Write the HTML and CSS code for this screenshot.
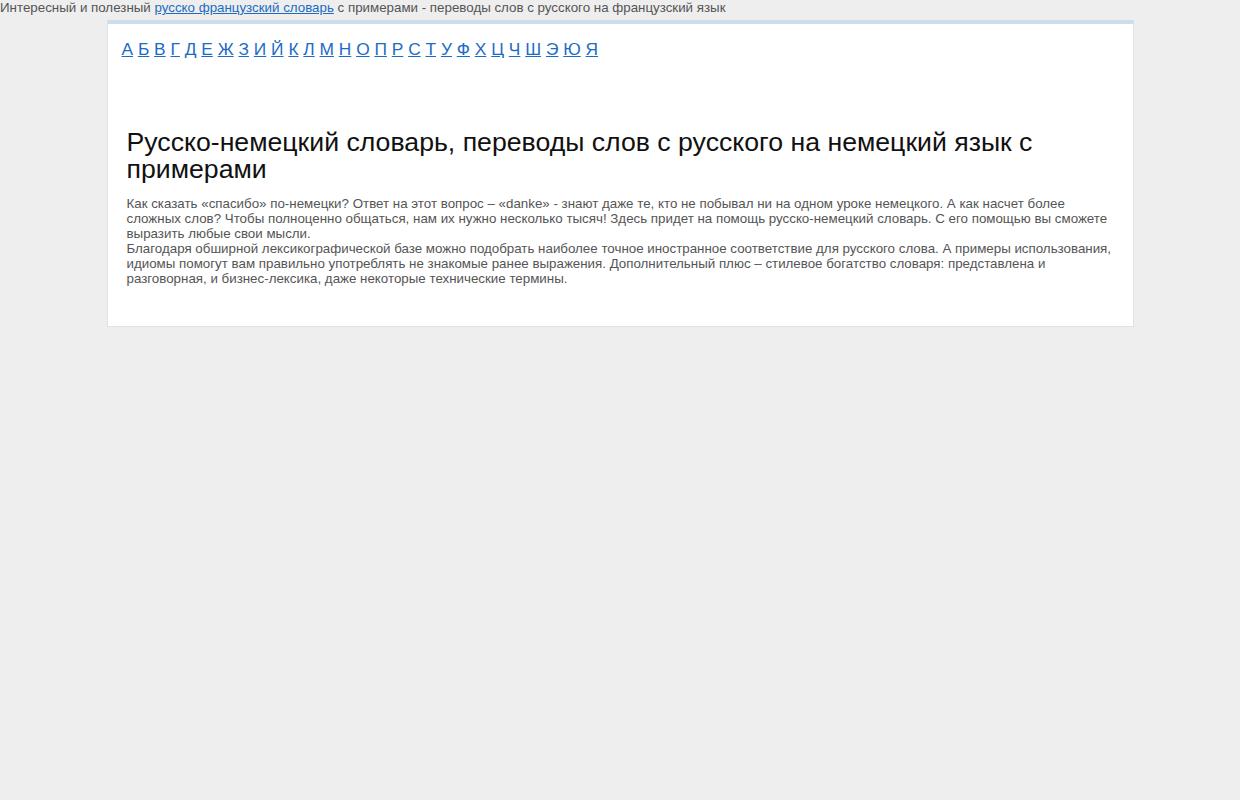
FILE: index.html
```html
<!DOCTYPE html>
<html lang="ru">
<head>
<meta charset="UTF-8" />
<meta name="viewport" content="width=device-width, initial-scale=1" />
<title>Русско-немецкий словарь</title>
<link rel="stylesheet" href="styles.css">
</head>
<body>

<div class="promo">
  Интересный и полезный <a href="#">русско французский словарь</a> с примерами - переводы слов с русского на французский язык
</div>

<div class="page">
  <!-- Alphabet -->
  <nav class="abc">
    <a href="#">А</a> <a href="#">Б</a> <a href="#">В</a> <a href="#">Г</a> <a href="#">Д</a> <a href="#">Е</a> <a href="#">Ж</a> <a href="#">З</a> <a href="#">И</a> <a href="#">Й</a> <a href="#">К</a> <a href="#">Л</a> <a href="#">М</a> <a href="#">Н</a> <a href="#">О</a> <a href="#">П</a> <a href="#">Р</a> <a href="#">С</a> <a href="#">Т</a> <a href="#">У</a> <a href="#">Ф</a> <a href="#">Х</a> <a href="#">Ц</a> <a href="#">Ч</a> <a href="#">Ш</a> <a href="#">Э</a> <a href="#">Ю</a> <a href="#">Я</a>
  </nav>

  <div class="intro">
    <h1>Русско-немецкий словарь, переводы слов с русского на немецкий язык с примерами</h1>
    <p>Как сказать «спасибо» по-немецки? Ответ на этот вопрос – «danke» - знают даже те, кто не побывал ни на одном уроке немецкого. А как насчет более сложных слов? Чтобы полноценно общаться, нам их нужно несколько тысяч! Здесь придет на помощь русско-немецкий словарь. С его помощью вы сможете выразить любые свои мысли.</p>
    <p>Благодаря обширной лексикографической базе можно подобрать наиболее точное иностранное соответствие для русского слова. А примеры использования, идиомы помогут вам правильно употреблять не знакомые ранее выражения. Дополнительный плюс – стилевое богатство словаря: представлена и разговорная, и бизнес-лексика, даже некоторые технические термины.</p>
  </div>
</div>

</body>
</html>
```

FILE: styles.css
```css
* {
  margin: 0; padding: 0; box-sizing: border-box;
}
body {
  font-family: "Liberation Sans", Arial, sans-serif;
  background: #eeeeee;
  color: #555;
  font-size: 10pt;
  line-height: 15px;
}
a {
  color: #1c6cc4;
}
.promo {
  height: 20px;
}
.page {
  width: 1027px;
  margin: 0 auto;
  background: #fff;
  border: 1px solid #dde4e8;
  border-top: 4px solid #cadeed;
  padding: 14px 14px 40px 14px;
}
.abc {
  font-size: 13pt;
  line-height: 22px;
}
.intro {
  padding: 0 6px 0 5px;
  margin-top: 69px;
}
.intro h1 {
  font-weight: normal;
  font-size: 20pt;
  line-height: 27px;
  color: #111;
  margin-bottom: 13px;
}
```
